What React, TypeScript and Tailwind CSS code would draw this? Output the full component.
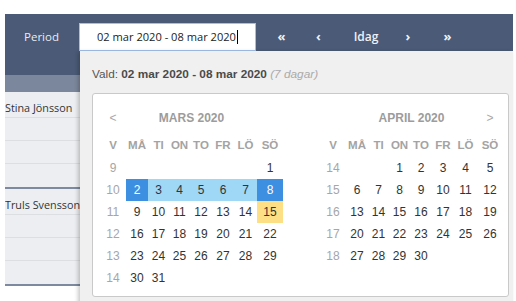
import React from "react";

type Kind = "start" | "end" | "range" | "today" | undefined;
type Week = { wk: number; days: (number | null)[] };

const mars: Week[] = [
  { wk: 9, days: [null, null, null, null, null, null, 1] },
  { wk: 10, days: [2, 3, 4, 5, 6, 7, 8] },
  { wk: 11, days: [9, 10, 11, 12, 13, 14, 15] },
  { wk: 12, days: [16, 17, 18, 19, 20, 21, 22] },
  { wk: 13, days: [23, 24, 25, 26, 27, 28, 29] },
  { wk: 14, days: [30, 31, null, null, null, null, null] },
];

const april: Week[] = [
  { wk: 14, days: [null, null, 1, 2, 3, 4, 5] },
  { wk: 15, days: [6, 7, 8, 9, 10, 11, 12] },
  { wk: 16, days: [13, 14, 15, 16, 17, 18, 19] },
  { wk: 17, days: [20, 21, 22, 23, 24, 25, 26] },
  { wk: 18, days: [27, 28, 29, 30, null, null, null] },
];

const dayNames = ["MÅ", "TI", "ON", "TO", "FR", "LÖ", "SÖ"];

function kindOf(isMars: boolean, d: number | null): Kind {
  if (!isMars || d === null) return undefined;
  if (d === 2) return "start";
  if (d === 8) return "end";
  if (d >= 3 && d <= 7) return "range";
  if (d === 15) return "today";
  return undefined;
}

function cellClass(k: Kind) {
  switch (k) {
    case "start":
    case "end":
      return "bg-[#3d8fe2] text-white";
    case "range":
      return "bg-[#9fd7f6] text-[#333]";
    case "today":
      return "bg-[#fde086] text-[#333]";
    default:
      return "text-[#333]";
  }
}

function Month({ title, weeks, isMars }: { title: string; weeks: Week[]; isMars: boolean }) {
  const grid = "grid grid-cols-[26px_22px_21px_21px_22px_22px_23px_26px]";
  return (
    <div className="w-[183px]">
      <div className={`${grid} h-[24px] items-center`}>
        <div className="text-center text-[12px] text-[#a8a8a8]">{isMars ? "<" : ""}</div>
        <div className="col-span-6 text-center text-[12px] font-bold text-[#9c9c9c]">{title}</div>
        <div className="text-center text-[12px] text-[#a8a8a8]">{isMars ? "" : ">"}</div>
      </div>
      <div className={`${grid} mt-[5px] h-[22px] items-center`}>
        <div className="text-center text-[11.5px] font-bold text-[#a3a3a3]">V</div>
        {dayNames.map((n) => (
          <div key={n} className="text-center text-[11.5px] font-bold text-[#a3a3a3]">
            {n}
          </div>
        ))}
      </div>
      {weeks.map((w) => (
        <div key={w.wk} className={`${grid} h-[22px]`}>
          <div className="flex items-center justify-center text-[12px] text-[#a6a6a6]">{w.wk}</div>
          {w.days.map((d, i) => {
            const k = kindOf(isMars, d);
            return (
              <div key={i} className={`flex items-center justify-center text-[12px] ${cellClass(k)}`}>
                {d ?? ""}
              </div>
            );
          })}
        </div>
      ))}
    </div>
  );
}

function Group({ name }: { name: string }) {
  return (
    <div className="border-b-2 border-[#7d899f]">
      <div className="h-[26px] overflow-hidden border-b border-[#dcdee2] bg-[#eceef1] pt-[8px] font-['Open_Sans',sans-serif] text-[10.8px] leading-[16px] whitespace-nowrap text-[#333]">
        <span className="block">{name}</span>
      </div>
      <div className="h-[23px] border-b border-[#dcdee2] bg-[#eceef1]" />
      <div className="h-[23px] border-b border-[#dcdee2] bg-[#eceef1]" />
      <div className="h-[23px] bg-[#eceef1]" />
    </div>
  );
}

export default function App() {
  return (
    <div className="relative h-[301px] w-[516px] overflow-hidden bg-white font-['Liberation_Sans',Arial,sans-serif]">
      <div className="ml-[5px] w-[508px] pt-[14px]">
        {/* header */}
        <div className="flex h-[61px] items-start bg-[#4a5a77] pt-[9px] font-['Open_Sans',sans-serif] text-[11.5px]">
          <div className="ml-[19px] flex h-[28px] w-[55px] items-center text-[#e8ecf2]">Period</div>
          <div className="relative flex h-[28px] w-[177px] items-center border border-[#a4c0ea] bg-white pl-[17px] text-[11.1px] text-[#222]">
            <span>02 mar 2020 - 08 mar 2020</span>
            <span className="ml-[1px] inline-block h-[14px] w-px bg-black" />
          </div>
          <div className="flex h-[28px] w-[51px] items-center justify-center text-[13px] font-bold text-[#eef1f6]">«</div>
          <div className="flex h-[28px] w-[23px] items-center justify-center text-[13px] font-bold text-[#eef1f6]">‹</div>
          <div className="flex h-[28px] w-[72px] items-center justify-center text-[12px] font-semibold text-[#eef1f6]">Idag</div>
          <div className="flex h-[28px] w-[12px] items-center justify-center text-[13px] font-bold text-[#eef1f6]">›</div>
          <div className="flex h-[28px] w-[67px] items-center justify-center text-[13px] font-bold text-[#eef1f6]">»</div>
        </div>
        <div className="h-[17px] bg-[#7b879c]" />
        <Group name="Stina Jönsson" />
        <Group name="Truls Svensson" />
      </div>

      {/* popup */}
      <div className="absolute left-[80px] top-[51px] h-[260px] w-[433px] bg-[#f0f0f0] pl-[12px] pt-[15px] shadow-[-2px_1px_4px_rgba(0,0,0,0.22)]">
        <div className="h-[16px] text-[11.8px] leading-[16px] whitespace-nowrap text-[#555]">
          Vald: <span className="font-bold text-[#4a4a4a]">02 mar 2020 - 08 mar 2020</span>{" "}
          <span className="italic text-[#aaaaaa]">(7 dagar)</span>
        </div>
        <div className="mt-[11px] flex h-[204px] w-[417px] gap-[37px] rounded-[3px] border border-[#c9c9c9] bg-white pl-[7px] pt-[12px]">
          <Month title="MARS 2020" weeks={mars} isMars={true} />
          <Month title="APRIL 2020" weeks={april} isMars={false} />
        </div>
      </div>
    </div>
  );
}
